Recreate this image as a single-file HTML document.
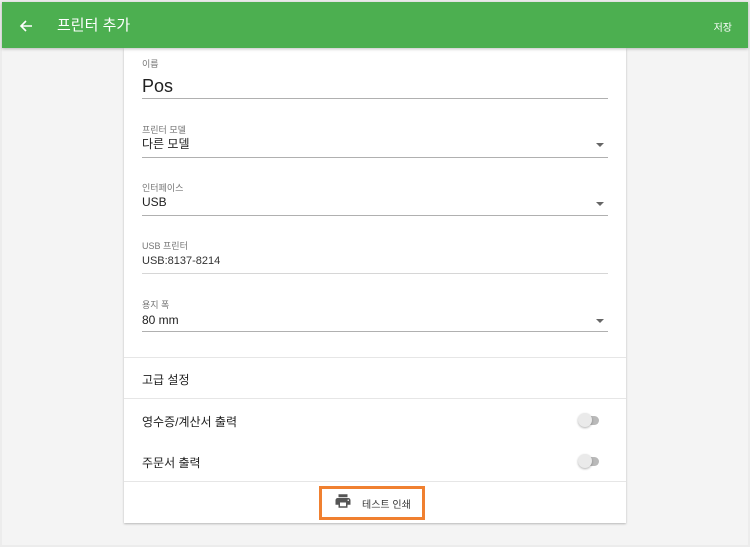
<!DOCTYPE html>
<html><head><meta charset="utf-8"><style>
*{margin:0;padding:0;box-sizing:border-box}
body{width:750px;height:547px;background:#ececec;font-family:"Liberation Sans","Noto Sans CJK KR",sans-serif;position:relative;overflow:hidden;color:#212121}
.inner{position:absolute;left:2px;top:2px;width:746px;height:543px;background:#f4f4f4}
.hdr{position:absolute;left:2px;top:2px;width:746px;height:46px;background:#4caf50;color:#fff;box-shadow:0 1px 3px rgba(0,0,0,.25);z-index:2}
.hdr .t{position:absolute;left:55px;top:12px;font-size:15px}
.hdr .s{position:absolute;right:16px;top:17px;font-size:10px}
.card{position:absolute;left:124px;top:48px;width:502px;height:475px;background:#fff;box-shadow:0 1px 2px rgba(0,0,0,.25)}
.a{position:absolute}
.lbl{font-size:9px;color:#757575;left:18px}
.val{font-size:12px;left:18px}
.line{left:18px;width:466px;height:1px;background:#b0b0b0}
.arr{width:0;height:0;border-left:4px solid transparent;border-right:4px solid transparent;border-top:4px solid #666;left:472px}
.div{left:0;width:502px;height:1px;background:#e6e6e6}
.row{left:18px;font-size:12px}
.tg{left:454px;width:22px;height:14px}
.tg .tr{position:absolute;left:6px;top:3px;width:15px;height:9px;border-radius:5px;background:#b9b9b9}
.tg .th{position:absolute;left:0;top:0;width:14px;height:14px;border-radius:50%;background:#eaeaea;box-shadow:0 1px 2px rgba(0,0,0,.3)}
</style></head><body>
<div class="inner"></div>
<div class="hdr">
<svg style="position:absolute;left:17px;top:17px" width="14" height="14" viewBox="0 0 14 14"><path d="M13 7H2M7 2L2 7l5 5" stroke="#fff" stroke-width="1.6" fill="none"/></svg>
<div class="t">프린터 추가</div><div class="s">저장</div></div>
<div class="card">
<div class="a lbl" style="top:9px">이름</div>
<div class="a val" style="top:28px;font-size:18px">Pos</div>
<div class="a line" style="top:50px"></div>

<div class="a lbl" style="top:75px">프린터 모델</div>
<div class="a val" style="top:87px">다른 모델</div>
<div class="a arr" style="top:95px"></div>
<div class="a line" style="top:109px"></div>

<div class="a lbl" style="top:133px">인터페이스</div>
<div class="a val" style="top:147px">USB</div>
<div class="a arr" style="top:154px"></div>
<div class="a line" style="top:167px"></div>

<div class="a lbl" style="top:191px">USB 프린터</div>
<div class="a val" style="top:207px;font-size:11px;color:#333">USB:8137-8214</div>
<div class="a line" style="top:225px;background:#d6d6d6;height:1px"></div>

<div class="a lbl" style="top:250px">용지 폭</div>
<div class="a val" style="top:265px">80 mm</div>
<div class="a arr" style="top:271px"></div>
<div class="a line" style="top:283px"></div>

<div class="a div" style="top:309px"></div>
<div class="a row" style="top:323px">고급 설정</div>
<div class="a div" style="top:350px"></div>
<div class="a row" style="top:365px">영수증/계산서 출력</div>
<div class="a tg" style="top:365px"><div class="tr"></div><div class="th"></div></div>
<div class="a row" style="top:406px">주문서 출력</div>
<div class="a tg" style="top:406px"><div class="tr"></div><div class="th"></div></div>
<div class="a div" style="top:433px"></div>
<div class="a" style="left:195px;top:438px;width:106px;height:34px;border:3px solid #f08030"></div>
<svg class="a" style="left:210px;top:444px" width="18" height="18" viewBox="0 0 24 24"><path fill="#555" d="M19 8H5c-1.66 0-3 1.34-3 3v6h4v4h12v-4h4v-6c0-1.66-1.34-3-3-3zm-3 11H8v-5h8v5zm3-7c-.55 0-1-.45-1-1s.45-1 1-1 1 .45 1 1-.45 1-1 1zm-1-9H6v4h12V3z"/></svg>
<div class="a" style="left:238px;top:448px;font-size:10px;color:#333">테스트 인쇄</div>
</div>
</body></html>
